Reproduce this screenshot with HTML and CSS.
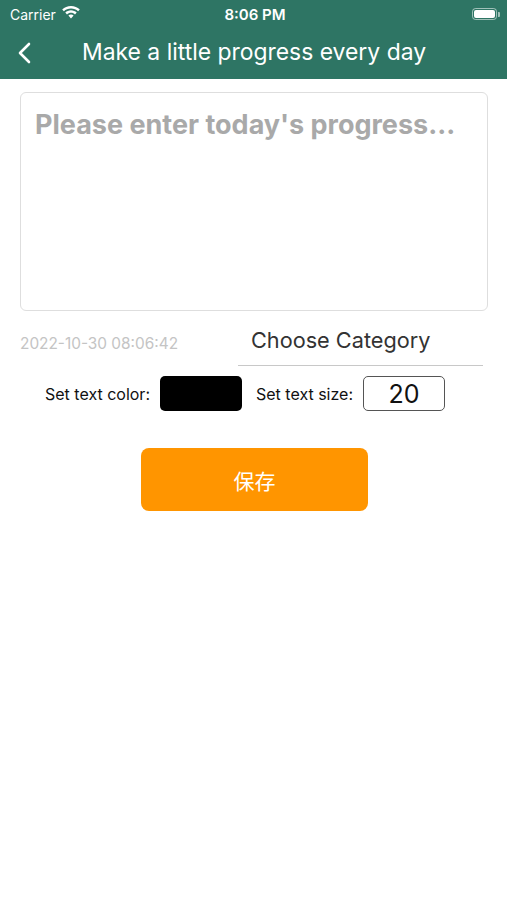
FILE: index.html
```html
<!DOCTYPE html>
<html>
<head>
<meta charset="utf-8">
<link rel="stylesheet" href="styles.css">
</head>
<body>
<header class="top">
  <div class="status">
    <div class="status-left">
      <span class="carrier">Carrier</span>
      <svg class="wifi" width="18" height="13" viewBox="0 0 18 13">
        <path d="M9 0C5.6 0 2.5 1.3.2 3.5l1.7 1.8C3.7 3.5 6.2 2.5 9 2.5s5.3 1 7.1 2.8l1.7-1.8C15.5 1.3 12.4 0 9 0z" fill="#fff"/>
        <path d="M9 4.3c-2.2 0-4.2.9-5.7 2.3L5 8.4C6 7.4 7.4 6.8 9 6.8s3 .6 4 1.6l1.7-1.8C13.2 5.2 11.2 4.3 9 4.3z" fill="#fff"/>
        <path d="M9 8.6c-1 0-1.9.4-2.6 1L9 12.4l2.6-2.8c-.7-.6-1.6-1-2.6-1z" fill="#fff"/>
      </svg>
    </div>
    <span class="time">8:06 PM</span>
    <div class="status-right">
      <div class="battery"><div class="battery-fill"></div></div>
      <div class="battery-tip"></div>
    </div>
  </div>
  <nav class="navbar">
    <svg class="back" width="14" height="22" viewBox="0 0 14 22">
      <path d="M12 2L3 11l9 9" fill="none" stroke="#fff" stroke-width="2.6" stroke-linecap="round" stroke-linejoin="round"/>
    </svg>
    <h1 class="title">Make a little progress every day</h1>
  </nav>
</header>
<main class="content">
  <div class="editor">Please enter today's progress...</div>
  <div class="meta-row">
    <span class="date">2022-10-30 08:06:42</span>
    <div class="category">Choose Category</div>
  </div>
  <div class="settings-row">
    <span class="label">Set text color:</span>
    <div class="swatch"></div>
    <span class="label label-size">Set text size:</span>
    <div class="size-box">20</div>
  </div>
  <div class="btn-row">
    <button class="save">保存</button>
  </div>
</main>
</body>
</html>
```

FILE: styles.css
```css
* { box-sizing: border-box; }
html, body { margin: 0; padding: 0; }
body {
  width: 507px;
  height: 900px;
  background: #fff;
  font-family: Inter, "Liberation Sans", "Noto Sans CJK SC", sans-serif;
  overflow: hidden;
}
.top {
  background: #2e7564;
  height: 79px;
  color: #fff;
}
.status {
  height: 28px;
  display: flex;
  align-items: center;
  justify-content: space-between;
  padding: 0 7px 0 10px;
}
.status-left {
  display: flex;
  align-items: center;
  gap: 6px;
  width: 120px;
}
.carrier { font-size: 14px; }
.wifi { margin-top: -3px; }
.time {
  font-size: 15px;
  font-weight: 600;
}
.status-right {
  width: 120px;
  display: flex;
  align-items: center;
  justify-content: flex-end;
}
.battery {
  width: 25px;
  height: 12px;
  border: 1px solid rgba(255,255,255,0.55);
  border-radius: 3.5px;
  padding: 1px;
}
.battery-fill {
  width: 100%;
  height: 100%;
  background: #fff;
  border-radius: 2px;
}
.battery-tip {
  width: 2px;
  height: 5px;
  background: rgba(255,255,255,0.55);
  border-radius: 0 1px 1px 0;
  margin-left: 1px;
}
.navbar {
  height: 51px;
  display: flex;
  align-items: center;
  padding-left: 17px;
}
.back { flex: none; margin-top: -2px; }
.title {
  margin: -4px 0 0 51px;
  font-size: 22.9px;
  font-weight: normal;
}
.content {
  padding: 13px 19px 0 20px;
}
.editor {
  height: 219px;
  border: 1px solid #dedede;
  border-radius: 6px;
  padding: 15px 0 0 14px;
  font-size: 27px;
  font-weight: bold;
  color: #a9a9a9;
}
.meta-row {
  display: flex;
  align-items: center;
  margin-top: 14px;
}
.date {
  font-size: 15.4px;
  color: #c4c4c4;
  width: 218px;
  margin-top: -5px;
}
.category {
  width: 245px;
  height: 41px;
  border-bottom: 1px solid #c8c8c8;
  font-size: 21.7px;
  color: #333;
  padding: 2px 0 0 13px;
}
.settings-row {
  display: flex;
  align-items: center;
  margin-top: 10px;
  padding-left: 25px;
}
.label {
  font-size: 16px;
  color: #111;
}
.swatch {
  width: 82px;
  height: 35px;
  background: #000;
  border-radius: 5px;
  margin-left: 10px;
}
.label-size { margin-left: 14px; }
.size-box {
  width: 82px;
  height: 35px;
  border: 1px solid #555;
  border-radius: 5px;
  margin-left: 10px;
  font-size: 25px;
  color: #111;
  display: flex;
  align-items: center;
  justify-content: center;
}
.btn-row {
  display: flex;
  padding-left: 121px;
  margin-top: 37px;
}
.save {
  width: 227px;
  height: 63px;
  border: none;
  border-radius: 8px;
  background: #ff9500;
  color: #fff;
  font-size: 21px;
  font-family: "Noto Sans CJK SC", sans-serif;
}
```
